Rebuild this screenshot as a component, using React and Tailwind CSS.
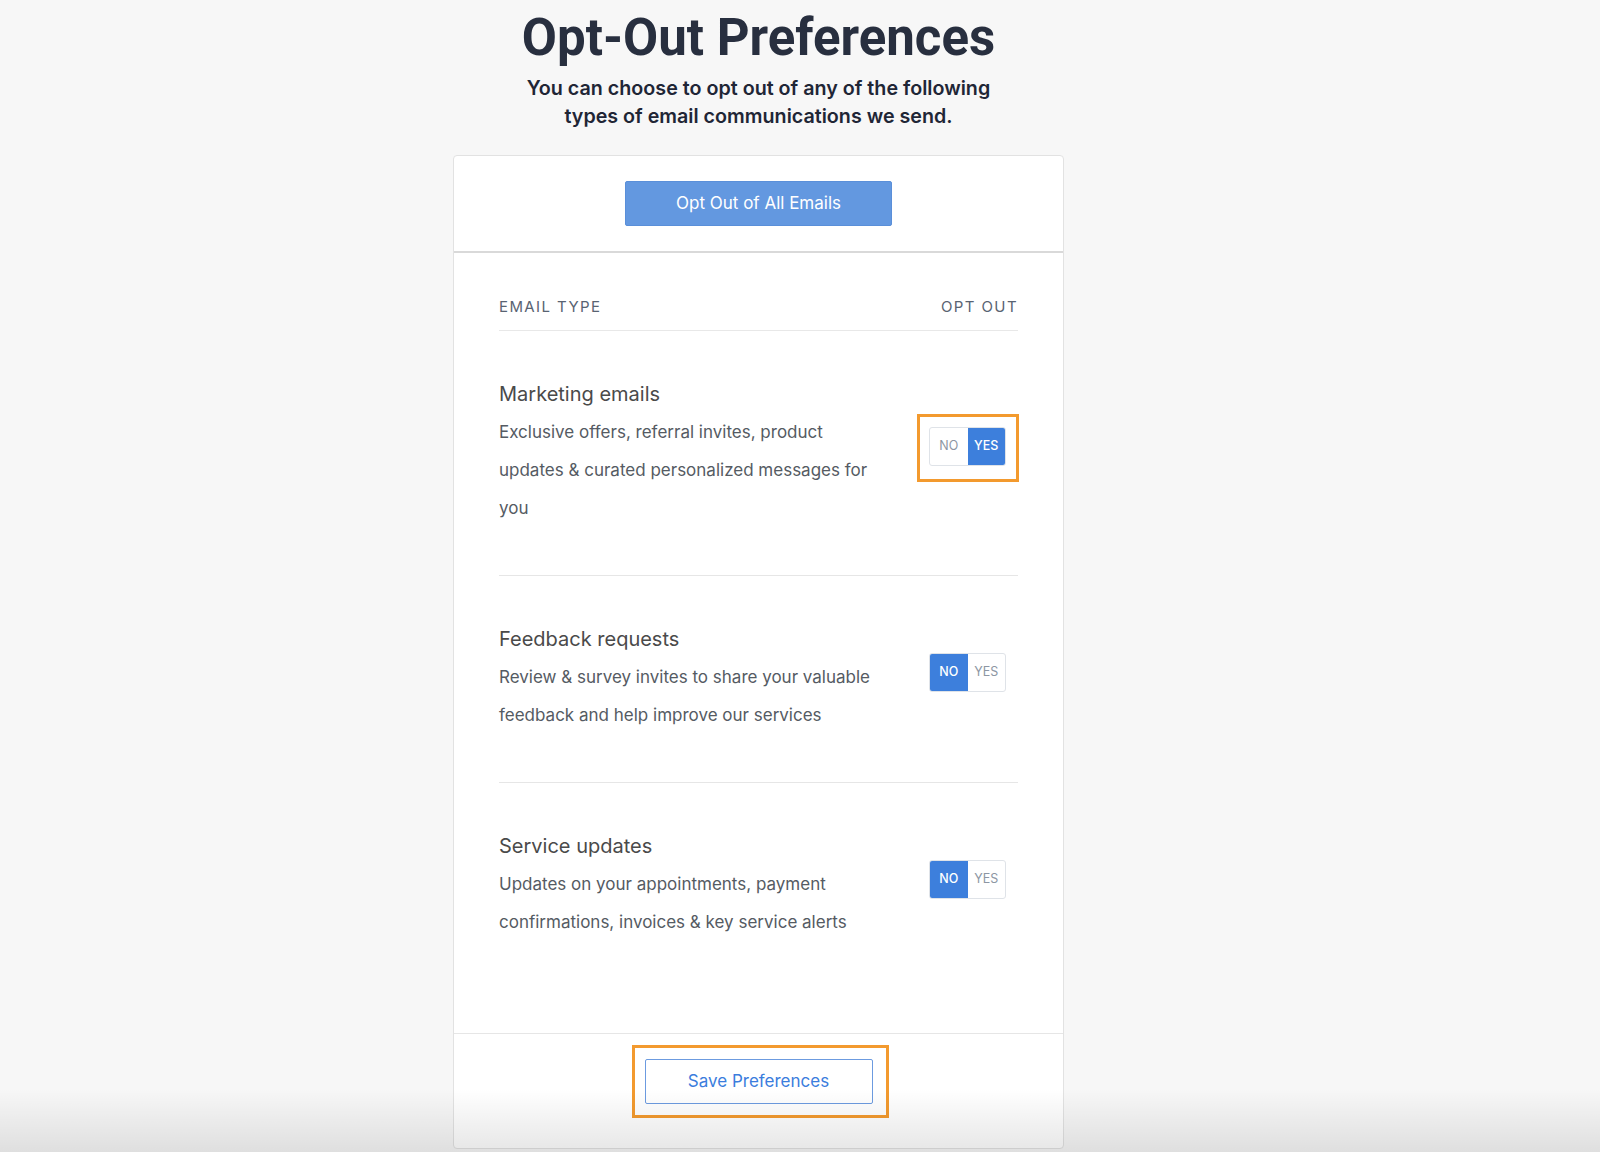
import { useState } from 'react';

const emailTypes = [
  {
    id: 'marketing',
    title: 'Marketing emails',
    lines: ['Exclusive offers, referral invites, product', 'updates & curated personalized messages for', 'you'],
    highlight: true,
  },
  {
    id: 'feedback',
    title: 'Feedback requests',
    lines: ['Review & survey invites to share your valuable', 'feedback and help improve our services'],
  },
  {
    id: 'service',
    title: 'Service updates',
    lines: ['Updates on your appointments, payment', 'confirmations, invoices & key service alerts'],
  },
];

function Toggle({ value, onChange }) {
  return (
    <div className="flex h-[39px] w-[77px] rounded-[3px] border border-[#dfe3e8] bg-white text-[12.5px] overflow-hidden">
      <button
        onClick={() => onChange(false)}
        className={`flex-1 flex items-center justify-center ${
          !value ? 'bg-[#3d7fdc] text-white font-medium' : 'text-[#8d96a3]'
        }`}
      >
        NO
      </button>
      <button
        onClick={() => onChange(true)}
        className={`flex-1 flex items-center justify-center ${
          value ? 'bg-[#3d7fdc] text-white font-medium' : 'text-[#8d96a3]'
        }`}
      >
        YES
      </button>
    </div>
  );
}

function App() {
  const [optOut, setOptOut] = useState({ marketing: true, feedback: false, service: false });

  return (
    <div className="relative min-h-screen bg-[#f7f7f7] font-['Inter',sans-serif] overflow-hidden">
      <div className="ml-[453px] w-[611px] pt-[10px] pb-[4px]">
        <h1 className="text-center font-['Roboto',sans-serif] text-[51px] leading-[56px] font-bold text-[#282f3f]">
          Opt-Out Preferences
        </h1>
        <p className="mt-[8px] mx-auto w-[480px] text-center text-[19.7px] leading-[28px] font-semibold text-[#1f2636]">
          You can choose to opt out of any of the following
          <br />
          types of email communications we send.
        </p>

        <div className="mt-[25px] bg-white border border-[#e2e2e2] rounded-[4px]">
          <div className="flex justify-center pt-[25px] pb-[25px] border-b-2 border-[#d9d9d9]">
            <button className="w-[267px] h-[45px] bg-[#6398e0] border border-[#5a8fd9] rounded-[2px] text-white text-[17px]">
              Opt Out of All Emails
            </button>
          </div>

          <div className="px-[45px] pb-[44px]">
            <div className="flex justify-between pt-[42px] pb-[11px] border-b border-[#e8e8e8] text-[15px] leading-[24px] tracking-[1.4px] text-[#596372]">
              <span>EMAIL TYPE</span>
              <span>OPT OUT</span>
            </div>

            {emailTypes.map((item, i) => (
              <div
                key={item.id}
                className={`flex items-center justify-between pt-[49px] pb-[48px] ${
                  i < emailTypes.length - 1 ? 'border-b border-[#e6e6e6]' : ''
                }`}
              >
                <div>
                  <h3 className="text-[20px] leading-[28px] text-[#4a4a4a]">{item.title}</h3>
                  <p className="mt-[5px] text-[17px] leading-[38px] text-[#555b63]">
                    {item.lines.map((line) => (
                      <span key={line} className="block whitespace-nowrap">{line}</span>
                    ))}
                  </p>
                </div>
                <div className="pr-[12px] pb-[15px]">
                  <div className="relative">
                    <Toggle
                      value={optOut[item.id]}
                      onChange={(v) => setOptOut({ ...optOut, [item.id]: v })}
                    />
                    {item.highlight && (
                      <span className="absolute -left-[12px] -right-[13px] -top-[13px] -bottom-[16px] border-[3px] border-[#f39a2e] pointer-events-none" />
                    )}
                  </div>
                </div>
              </div>
            ))}
          </div>

          <div className="flex justify-center pt-[25px] pb-[44px] border-t border-[#e6e6e6]">
            <div className="relative">
              <button className="w-[228px] h-[45px] bg-white border border-[#6c9be0] rounded-[2px] text-[#3b7ddd] text-[17px]">
                Save Preferences
              </button>
              <span className="absolute -left-[13px] -right-[16px] -top-[14px] -bottom-[14px] border-[3px] border-[#f39a2e] pointer-events-none" />
            </div>
          </div>
        </div>
      </div>
      <div className="absolute left-0 right-0 bottom-0 h-[64px] bg-gradient-to-b from-transparent to-black/10 pointer-events-none" />
    </div>
  );
}

export default App;
